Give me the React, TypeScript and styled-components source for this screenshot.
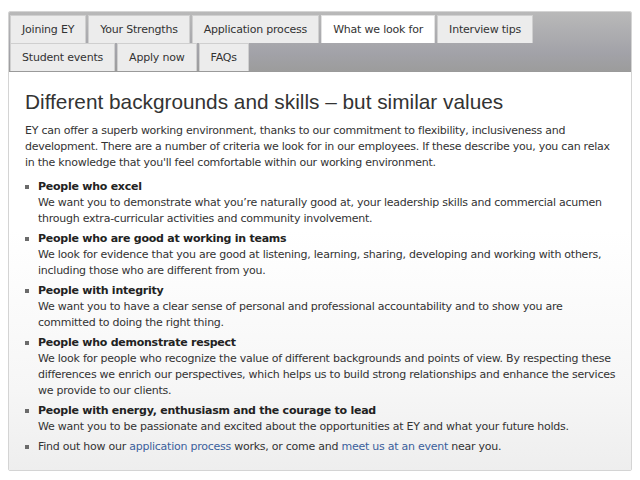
import React from "react";
import styled, { createGlobalStyle } from "styled-components";

const GlobalStyle = createGlobalStyle`
  body {
    margin: 0;
    background: #fff;
    font-family: "DejaVu Sans", Verdana, sans-serif;
  }
`;

const Page = styled.div`
  padding: 11px 8px 7px 8px;
`;

const Panel = styled.div`
  border: 1px solid #d4d4d4;
  border-radius: 2px;
  overflow: hidden;
  height: 460px;
  box-sizing: border-box;
  display: flex;
  flex-direction: column;
`;

const TabBar = styled.div`
  background: linear-gradient(#b9b9b9, #a2a2a8 70%, #9c9c9c);
  padding: 3px 0 0 1px;
  border-bottom: 1px solid #9a9a9a;
`;

const TabRow = styled.div`
  display: flex;
  gap: 2px;
`;

const Tab = styled.div<{ $active?: boolean }>`
  height: 28px;
  box-sizing: border-box;
  padding: 0 11px;
  display: flex;
  align-items: center;
  font-size: 11px;
  letter-spacing: -0.2px;
  color: #333;
  background: ${p => (p.$active ? "#fff" : "#ececec")};
  border: 1px solid ${p => (p.$active ? "#e2e2e2" : "#cfcfcf")};
  border-bottom: none;
  white-space: nowrap;
`;

const Content = styled.div`
  flex: 1;
  background: linear-gradient(#ffffff 40%, #f6f6f6 80%, #eeeeee);
  padding: 17px 17px 0 16px;
  color: #333;
`;

const Heading = styled.h1`
  margin: 0 0 8px 0;
  font-family: "Liberation Sans", Arial, sans-serif;
  font-weight: normal;
  font-size: 20.8px;
  line-height: 26px;
  color: #333;
`;

const Line = styled.div`
  white-space: nowrap;
`;

const Intro = styled.div`
  margin: 0 0 8px 0;
  font-size: 11px;
  line-height: 16px;
  letter-spacing: -0.25px;
`;

const List = styled.ul`
  list-style: none;
  margin: 0;
  padding: 0;
`;

const Item = styled.li`
  position: relative;
  padding-left: 13px;
  margin-bottom: 4px;
  font-size: 11px;
  line-height: 16px;
  letter-spacing: -0.25px;
  white-space: nowrap;
  &::before {
    content: "";
    position: absolute;
    left: 0;
    top: 6px;
    width: 4px;
    height: 4px;
    background: #6b6b6b;
  }
`;

const Title = styled.div`
  font-weight: bold;
  color: #222;
`;

const Link = styled.a`
  color: #3b5f9c;
  text-decoration: none;
`;

const tabsTop = ["Joining EY", "Your Strengths", "Application process", "What we look for", "Interview tips"];
const tabsBottom = ["Student events", "Apply now", "FAQs"];

const intro = [
  "EY can offer a superb working environment, thanks to our commitment to flexibility, inclusiveness and",
  "development. There are a number of criteria we look for in our employees. If these describe you, you can relax",
  "in the knowledge that you'll feel comfortable within our working environment.",
];

const items: { title: string; lines: string[] }[] = [
  {
    title: "People who excel",
    lines: [
      "We want you to demonstrate what you\u2019re naturally good at, your leadership skills and commercial acumen",
      "through extra-curricular activities and community involvement.",
    ],
  },
  {
    title: "People who are good at working in teams",
    lines: [
      "We look for evidence that you are good at listening, learning, sharing, developing and working with others,",
      "including those who are different from you.",
    ],
  },
  {
    title: "People with integrity",
    lines: [
      "We want you to have a clear sense of personal and professional accountability and to show you are",
      "committed to doing the right thing.",
    ],
  },
  {
    title: "People who demonstrate respect",
    lines: [
      "We look for people who recognize the value of different backgrounds and points of view. By respecting these",
      "differences we enrich our perspectives, which helps us to build strong relationships and enhance the services",
      "we provide to our clients.",
    ],
  },
  {
    title: "People with energy, enthusiasm and the courage to lead",
    lines: ["We want you to be passionate and excited about the opportunities at EY and what your future holds."],
  },
];

export default function App() {
  return (
    <Page>
      <GlobalStyle />
      <Panel>
        <TabBar>
          <TabRow>
            {tabsTop.map(t => (
              <Tab key={t} $active={t === "What we look for"}>{t}</Tab>
            ))}
          </TabRow>
          <TabRow>
            {tabsBottom.map(t => (
              <Tab key={t}>{t}</Tab>
            ))}
          </TabRow>
        </TabBar>
        <Content>
          <Heading>Different backgrounds and skills – but similar values</Heading>
          <Intro>
            {intro.map(l => (
              <Line key={l}>{l}</Line>
            ))}
          </Intro>
          <List>
            {items.map(it => (
              <Item key={it.title}>
                <Title>{it.title}</Title>
                {it.lines.map(l => (
                  <Line key={l}>{l}</Line>
                ))}
              </Item>
            ))}
            <Item>
              Find out how our <Link href="#">application process</Link> works, or come and{" "}
              <Link href="#">meet us at an event</Link> near you.
            </Item>
          </List>
        </Content>
      </Panel>
    </Page>
  );
}
